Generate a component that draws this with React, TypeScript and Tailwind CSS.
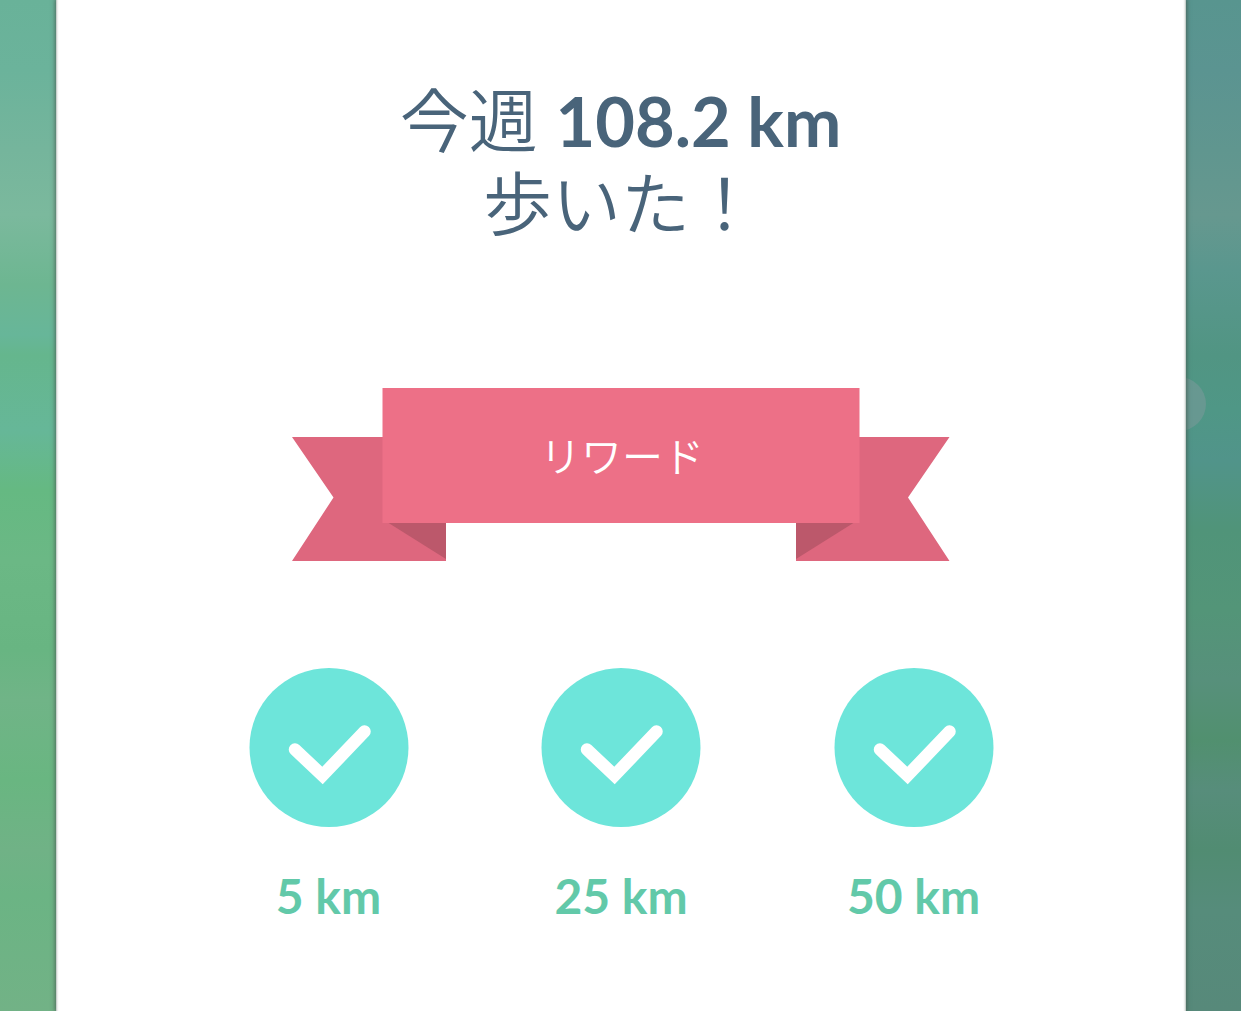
const rewards = ["5 km", "25 km", "50 km"];

function Ribbon() {
  return (
    <div className="relative mt-[143px] h-[173px] w-[658px]">
      <svg className="absolute inset-0" width="658" height="173" viewBox="0 0 658 173" aria-hidden="true">
        <path d="M0 49H154V173H0L41.500 109.500Z" fill="#de677e" />
        <path d="M657.500 49H504V173H657.500L616 109.500Z" fill="#de677e" />
        <path d="M95 134H154V171Z" fill="#bc586b" />
        <path d="M563 134H504V171Z" fill="#bc586b" />
        <rect x="90.500" y="0" width="477" height="135" fill="#ed7087" />
      </svg>
      <div className="relative flex h-[135px] items-center justify-center pl-0.5 text-[41px] font-[350] leading-none text-white">
        <span className="relative top-px">リワード</span>
      </div>
    </div>
  );
}

function Reward({ label }: { label: string }) {
  return (
    <li className="flex w-[292.5px] flex-col items-center">
      <svg width="160" height="160" viewBox="0 0 160 160" aria-hidden="true">
        <circle cx="80" cy="80.500" r="79.500" fill="#6de5da" />
        <path d="M46 82.500L73.500 108.500L115.500 64.500" fill="none" stroke="#fff" strokeWidth="12.500" strokeLinecap="round" strokeLinejoin="miter" />
      </svg>
      <span className="mt-[45px] whitespace-nowrap text-[48px] font-bold leading-[48px] text-[#62c9a9]">{label}</span>
    </li>
  );
}

export default function App() {
  return (
    <div className="flex h-[1011px] w-[1241px] overflow-hidden bg-white font-['Lato','Noto_Sans_CJK_JP',sans-serif]">
      <div className="w-[56px] shrink-0 bg-[linear-gradient(180deg,#69b299_0px,#6bb39b_70px,#75b59c_150px,#7bb99d_215px,#6db691_285px,#67b699_335px,#65b68d_355px,#66b798_430px,#65b982_490px,#6bb885_560px,#68b582_650px,#70b487_700px,#69b681_780px,#70b286_850px,#6bb484_895px,#72b286_1011px)]" />
      <main className="relative z-10 flex w-[1130px] shrink-0 flex-col items-center bg-white pt-[80px] shadow-[0_0_4px_1px_rgba(70,90,80,0.8),inset_3px_0_2px_-2px_rgba(110,130,120,0.5),inset_-3px_0_2px_-2px_rgba(110,130,120,0.5)]">
        <h1 className="text-center text-[69px] font-[350] leading-[82.5px] text-[#49647a]" lang="ja">
          今週 <span className="relative -left-px text-[68.5px] font-bold">108.2 km</span>
          <br />
          歩いた！
        </h1>
        <Ribbon />
        <ul className="mt-[106px] flex">
          {rewards.map((label) => <Reward key={label} label={label} />)}
        </ul>
      </main>
      <div className="relative w-[55px] shrink-0 bg-[linear-gradient(180deg,#58958f_0px,#5b9491_70px,#60968f_150px,#66988f_215px,#5a978e_270px,#519583_355px,#4f9786_410px,#51948a_460px,#509479_530px,#539578_610px,#57907b_680px,#51906f_740px,#578d7b_790px,#518c72_850px,#568c7b_910px,#57897a_1011px)]">
        <div className="absolute left-[-34px] top-[377px] size-[54px] rounded-full bg-[#729995]/70" />
      </div>
    </div>
  );
}
